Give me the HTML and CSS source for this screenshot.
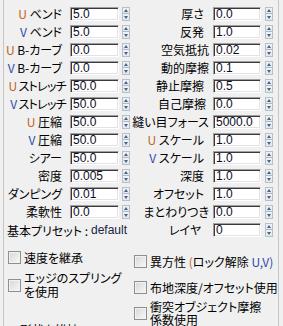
FILE: index.html
```html
<!DOCTYPE html>
<html lang="ja">
<head>
<meta charset="utf-8">
<title>Cloth</title>
<link rel="stylesheet" href="styles.css">
</head>
<body>
<div class="panel">
  <div class="params">
    <div class="col col-left">
      <div class="row"><span class="lbl"><span class="u">U</span> ベンド</span><span class="field">5.0</span><span class="spin"></span></div>
      <div class="row"><span class="lbl"><span class="v">V</span> ベンド</span><span class="field">5.0</span><span class="spin"></span></div>
      <div class="row"><span class="lbl"><span class="u">U</span> B-カーブ</span><span class="field">0.0</span><span class="spin"></span></div>
      <div class="row"><span class="lbl"><span class="v">V</span> B-カーブ</span><span class="field">0.0</span><span class="spin"></span></div>
      <div class="row"><span class="lbl wide"><span class="u">U</span> ストレッチ</span><span class="field">50.0</span><span class="spin"></span></div>
      <div class="row"><span class="lbl wide"><span class="v">V</span> ストレッチ</span><span class="field">50.0</span><span class="spin"></span></div>
      <div class="row"><span class="lbl"><span class="u">U</span> 圧縮</span><span class="field">50.0</span><span class="spin"></span></div>
      <div class="row"><span class="lbl"><span class="v">V</span> 圧縮</span><span class="field">50.0</span><span class="spin"></span></div>
      <div class="row"><span class="lbl">シアー</span><span class="field">50.0</span><span class="spin"></span></div>
      <div class="row"><span class="lbl">密度</span><span class="field">0.005</span><span class="spin"></span></div>
      <div class="row"><span class="lbl">ダンピング</span><span class="field">0.01</span><span class="spin"></span></div>
      <div class="row"><span class="lbl">柔軟性</span><span class="field">0.0</span><span class="spin"></span></div>
      <div class="preset">基本プリセット : <span class="val">default</span></div>
    </div>
    <div class="col col-right">
      <div class="row"><span class="lbl">厚さ</span><span class="field">0.0</span><span class="spin"></span></div>
      <div class="row"><span class="lbl">反発</span><span class="field">1.0</span><span class="spin"></span></div>
      <div class="row"><span class="lbl wide">空気抵抗</span><span class="field">0.02</span><span class="spin"></span></div>
      <div class="row"><span class="lbl wide">動的摩擦</span><span class="field">0.1</span><span class="spin"></span></div>
      <div class="row"><span class="lbl">静止摩擦</span><span class="field">0.5</span><span class="spin"></span></div>
      <div class="row"><span class="lbl mid">自己摩擦</span><span class="field">0.0</span><span class="spin"></span></div>
      <div class="row"><span class="lbl wide">縫い目フォース</span><span class="field">5000.0</span><span class="spin"></span></div>
      <div class="row"><span class="lbl"><span class="u">U</span> スケール</span><span class="field">1.0</span><span class="spin"></span></div>
      <div class="row"><span class="lbl"><span class="v">V</span> スケール</span><span class="field">1.0</span><span class="spin"></span></div>
      <div class="row"><span class="lbl">深度</span><span class="field">1.0</span><span class="spin"></span></div>
      <div class="row"><span class="lbl">オフセット</span><span class="field">1.0</span><span class="spin"></span></div>
      <div class="row"><span class="lbl wide">まとわりつき</span><span class="field">0.0</span><span class="spin"></span></div>
      <div class="row"><span class="lbl short">レイヤ</span><span class="field">0</span><span class="spin"></span></div>
    </div>
  </div>
  <div class="checks">
    <div class="ccol ccol-left">
      <div class="chk"><span class="box"></span><span class="txt">速度を継承</span></div>
      <div class="chk"><span class="box"></span><span class="txt two">エッジのスプリング<br>を使用</span></div>
      <div class="group"><span class="gtitle">形状を維持</span></div>
    </div>
    <div class="ccol ccol-right">
      <div class="chk"><span class="box"></span><span class="txt">異方性 <span class="u">(</span>ロック解除 <span class="v">U,V)</span></span></div>
      <div class="chk"><span class="box"></span><span class="txt">布地深度/オフセット使用</span></div>
      <div class="chk"><span class="box"></span><span class="txt two">衝突オブジェクト摩擦<br>係数使用</span></div>
    </div>
  </div>
</div>
</body>
</html>
```
FILE: styles.css
```css
* { box-sizing: border-box; }

html, body { height: 100%; }

body {
  margin: 0;
  background: #f0f0f0;
  color: #000;
  font-family: "Noto Sans CJK JP", "Noto Sans", sans-serif;
  font-size: 12px;
  font-feature-settings: "palt";
  overflow: hidden;
}

.panel {
  margin-left: 3px;
  width: 276px;
  height: 326px;
  border-left: 1px solid #c6c6c6;
  border-right: 1px solid #c6c6c6;
  padding-top: 5px;
  overflow: hidden;
}

.params {
  display: grid;
  grid-template-columns: 127px 1fr;
}

.row {
  display: flex;
  align-items: center;
  height: 18px;
}

.lbl {
  flex: none;
  text-align: right;
  white-space: nowrap;
  line-height: 14px;
}

.col-left .lbl { width: 58px; margin-right: 8px; }
.col-left .lbl.wide { width: 62px; margin-right: 4px; letter-spacing: -0.7px; }

.col-right .lbl { width: 82px; padding-right: 9px; }
.col-right .lbl.mid { padding-right: 7px; }
.col-right .lbl.wide { padding-right: 4px; }
.col-right .lbl.short { padding-right: 12px; }

.u { color: #c0651a; }
.v { color: #2c48ad; }

.field {
  flex: none;
  height: 14px;
  background: #fff;
  border: 1px solid;
  border-color: #a0a0a0 #ffffff #ffffff #a0a0a0;
  box-shadow: inset 1px 1px 0 #3a3a3a, inset -1px -1px 0 #e3e3e3;
  padding-left: 2px;
  font-family: "Liberation Sans", Arial, sans-serif;
  font-size: 12px;
  line-height: 13px;
  color: #0c0c24;
  white-space: nowrap;
  overflow: hidden;
}

.col-left .field { width: 49px; }
.col-right .field { width: 48px; }

.spin {
  flex: none;
  position: relative;
  width: 8px;
  height: 14px;
  border: 1px solid #b7bfcb;
  background: linear-gradient(to bottom, #f1f3f6 0, #e2e7ed 5px, #aeb8c6 5px, #aeb8c6 6px, #f1f3f6 6px, #e2e7ed 12px);
}
.col-left .spin { margin-left: 3px; }
.col-right .spin { margin-left: 4px; }

.spin::before,
.spin::after {
  content: "";
  position: absolute;
  left: 1px;
  border-left: 2px solid transparent;
  border-right: 2px solid transparent;
}
.spin::before { top: 1px; border-bottom: 3px solid #4a6388; }
.spin::after { bottom: 1px; border-top: 3px solid #4a6388; }

.preset {
  height: 18px;
  display: flex;
  align-items: center;
  padding-left: 3px;
  white-space: nowrap;
}
.preset .val {
  margin-left: 3px;
  font-family: "Liberation Sans", Arial, sans-serif;
  color: #1a2440;
}

.checks {
  display: grid;
  grid-template-columns: 130px 1fr;
}

.ccol-left { padding-top: 4px; padding-left: 4px; }
.ccol-right { padding-top: 9px; }

.chk {
  display: flex;
  align-items: center;
  white-space: nowrap;
}
.ccol-left .chk { height: 28px; }
.ccol-right .chk { height: 26px; }

.box {
  flex: none;
  width: 13px;
  height: 13px;
  margin-right: 3px;
  border: 1px solid #8e8f8f;
  background: linear-gradient(135deg, #d6d6d6, #f9f9f9);
  box-shadow: inset 0 0 0 1px #f2f2f2;
}

.txt { line-height: 13px; }
.ccol-left .txt.two { line-height: 14px; }
.ccol-right .txt.two { line-height: 13.5px; }

.group {
  display: flex;
  align-items: center;
  margin-top: 24px;
  padding-left: 5px;
}
.group::before {
  content: "";
  width: 5px;
  border-top: 1px solid #c6c6c6;
}
.group::after {
  content: "";
  flex: 1;
  border-top: 1px solid #c6c6c6;
}
.gtitle {
  padding: 0 3px 0 2px;
  line-height: 13px;
}
```
